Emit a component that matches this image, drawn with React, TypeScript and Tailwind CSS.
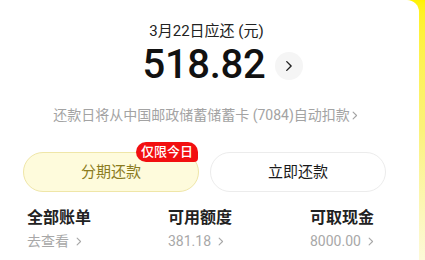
import React from "react";

const font = { fontFamily: 'Roboto, "Noto Sans CJK SC", sans-serif' };

function Chevron({ className = "" }: { className?: string }) {
  return (
    <svg viewBox="0 0 10 16" className={className} fill="none" stroke="currentColor" strokeWidth="1.6" strokeLinecap="round" strokeLinejoin="round">
      <path d="M3 3l5 5-5 5" />
    </svg>
  );
}

export default function App() {
  return (
    <div className="w-[425px] h-[260px] overflow-hidden flex bg-gradient-to-b from-[#fff200] via-[#fbf27a] to-[#fdf9d8]" style={font}>
      <div className="w-[419px] h-full bg-white rounded-tr-[12px] flex flex-col">
        <div className="flex flex-col items-center pt-[20px]">
          <div className="text-[15px] leading-[22px] text-[#222] mr-[6px]">3月22日应还 (元)</div>
          <div className="flex items-center mt-[1px] ml-[26px]">
            <div className="text-[40px] leading-[44px] font-medium text-[#111] tracking-[-0.3px]">518.82</div>
            <div className="ml-[9px] mt-[2px] w-[28px] h-[28px] rounded-full bg-[#f5f5f5] flex items-center justify-center text-[#222]">
              <Chevron className="w-[9px] h-[14px]" />
            </div>
          </div>
          <div className="mt-[19px] text-[14px] leading-[18px] text-[#a3a3a3] flex items-center mr-[8px]">
            还款日将从中国邮政储蓄储蓄卡 (7084)自动扣款
            <Chevron className="w-[7px] h-[11px] ml-[1px]" />
          </div>
        </div>
        <div className="flex gap-[11px] px-[23px] mt-[28px]">
          <div className="relative w-[176px] h-[40px] rounded-full bg-[#fefbdc] border border-[#efe6a8] flex items-center justify-center text-[15px] text-[#8b7b1e]">
            分期还款
            <div className="absolute right-[0px] top-[-11px] h-[20px] px-[5px] bg-[#f20f10] text-white text-[13px] leading-[20px] font-medium rounded-tl-[10px] rounded-bl-[10px] rounded-tr-[10px] rounded-br-[4px]">
              仅限今日
            </div>
          </div>
          <div className="w-[176px] h-[40px] rounded-full bg-white border border-[#ececec] flex items-center justify-center text-[15px] text-[#1a1a1a]">
            立即还款
          </div>
        </div>
        <div className="grid grid-cols-[141px_142px_120px] pl-[27px] mt-[15px]">
          {[
            ["全部账单", "去查看"],
            ["可用额度", "381.18"],
            ["可取现金", "8000.00"],
          ].map(([t, v]) => (
            <div key={t} className="flex flex-col">
              <div className="text-[16px] leading-[22px] font-bold text-[#222]">{t}</div>
              <div className="mt-[2px] flex items-center text-[14px] leading-[20px] text-[#a8a8a8]">
                {v}
                <Chevron className="w-[7px] h-[11px] ml-[6px]" />
              </div>
            </div>
          ))}
        </div>
      </div>
    </div>
  );
}
